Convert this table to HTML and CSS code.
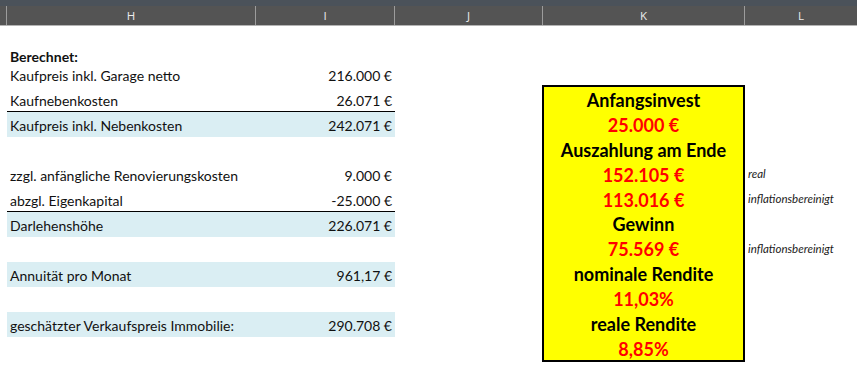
FILE: index.html
```html
<!DOCTYPE html>
<html lang="de">
<head>
<meta charset="utf-8">
<title>Berechnung</title>
<link rel="stylesheet" href="styles.css">
</head>
<body>
<div class="topstrip"></div>
<div class="colheads">
  <div class="ch ch-rn"></div>
  <div class="ch ch-h">H</div>
  <div class="ch ch-i">I</div>
  <div class="ch ch-j">J</div>
  <div class="ch ch-k">K</div>
  <div class="ch ch-l">L</div>
</div>
<div class="sheet">
  <div class="c lab first bold r1">Berechnet:</div>

  <div class="c lab r2">Kaufpreis inkl. Garage netto</div>
  <div class="c val r2">216.000 €</div>

  <div class="c lab r3 ul">Kaufnebenkosten</div>
  <div class="c val r3 ul">26.071 €</div>

  <div class="c lab r4 band">Kaufpreis inkl. Nebenkosten</div>
  <div class="c val r4 band">242.071 €</div>

  <div class="c lab r6">zzgl. anfängliche Renovierungskosten</div>
  <div class="c val r6">9.000 €</div>

  <div class="c lab r7 ul">abzgl. Eigenkapital</div>
  <div class="c val r7 ul">-25.000 €</div>

  <div class="c lab r8 band">Darlehenshöhe</div>
  <div class="c val r8 band">226.071 €</div>

  <div class="c lab r10 band">Annuität pro Monat</div>
  <div class="c val r10 band">961,17 €</div>

  <div class="c lab r12 band">geschätzter Verkaufspreis Immobilie:</div>
  <div class="c val r12 band">290.708 €</div>

  <div class="summary">
    <div class="sl">Anfangsinvest</div>
    <div class="sl red">25.000 €</div>
    <div class="sl">Auszahlung am Ende</div>
    <div class="sl red">152.105 €</div>
    <div class="sl red">113.016 €</div>
    <div class="sl">Gewinn</div>
    <div class="sl red">75.569 €</div>
    <div class="sl">nominale Rendite</div>
    <div class="sl red">11,03%</div>
    <div class="sl">reale Rendite</div>
    <div class="sl red">8,85%</div>
  </div>

  <div class="c note r6">real</div>
  <div class="c note r7">inflationsbereinigt</div>
  <div class="c note r9">inflationsbereinigt</div>
</div>
</body>
</html>
```
FILE: styles.css
```css
html, body {
  margin: 0;
  padding: 0;
  background: #ffffff;
  width: 857px;
  height: 388px;
  overflow: hidden;
}

.topstrip {
  height: 6px;
  background: #4b525a;
}

.colheads {
  display: grid;
  grid-template-columns: 7px 249px 139px 148px 202px 112px;
  height: 19px;
  background: #545454;
  border-bottom: 1px solid #b4b4b4;
}

.ch {
  border-right: 1px solid #9c9c9c;
  color: #ececec;
  font-family: "Open Sans", "DejaVu Sans", sans-serif;
  font-size: 11.5px;
  line-height: 19px;
  text-align: center;
}

.ch-l {
  border-right: none;
}

.sheet {
  display: grid;
  grid-template-columns: 7px 249px 139px 148px 202px 112px;
  grid-template-rows: 36px repeat(12, 25px);
  font-family: Lato, "Noto Sans", sans-serif;
  font-size: 14px;
  color: #111111;
}

.c {
  display: flex;
  align-items: flex-end;
  padding-bottom: 2px;
  box-sizing: border-box;
  white-space: nowrap;
  line-height: 18px;
}

.lab {
  grid-column: 2;
  padding-left: 3px;
}

.val {
  grid-column: 3;
  justify-content: flex-end;
  padding-right: 3px;
}

.bold {
  font-weight: 700;
}

.first {
  padding-bottom: 0;
  margin-bottom: -4px;
}

.r1 { grid-row: 1; }
.r2 { grid-row: 2; }
.r3 { grid-row: 3; }
.r4 { grid-row: 4; }
.r6 { grid-row: 6; }
.r7 { grid-row: 7; }
.r8 { grid-row: 8; }
.r9 { grid-row: 9; }
.r10 { grid-row: 10; }
.r12 { grid-row: 12; }

.ul {
  border-bottom: 1px solid #000000;
  padding-bottom: 1px;
}

.band {
  background: #daeef3;
}

.summary {
  grid-column: 5;
  grid-row: 3 / 14;
  margin: -2px 0 0 -1px;
  border: 2px solid #000000;
  background: #ffff00;
  display: flex;
  flex-direction: column;
  font-family: Lato, "Noto Sans", sans-serif;
  font-weight: 700;
  font-size: 18px;
  color: #000000;
}

.sl {
  flex: 1;
  display: flex;
  align-items: center;
  justify-content: center;
  line-height: 1;
  padding-top: 2px;
}

.red {
  color: #ff0000;
}

.note {
  grid-column: 6;
  padding-left: 3px;
  font-style: italic;
  font-size: 11.5px;
  padding-bottom: 4px;
  color: #1a1a1a;
}
```
